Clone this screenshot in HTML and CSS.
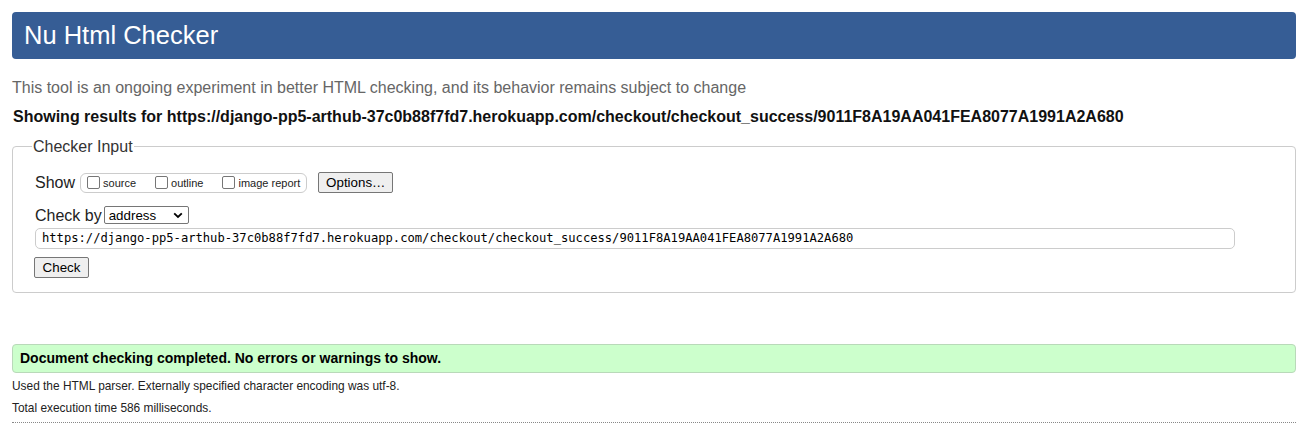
FILE: index.html
```html
<!DOCTYPE html>
<html lang="en">
<head>
<meta charset="utf-8">
<title>Nu Html Checker</title>
<link rel="stylesheet" href="styles.css">
</head>
<body>
<header class="masthead"><h1 class="title">Nu Html Checker</h1></header>
<p class="intro">This tool is an ongoing experiment in better HTML checking, and its behavior remains subject to change</p>
<p class="showing">Showing results for https://django-pp5-arthub-37c0b88f7fd7.herokuapp.com/checkout/checkout_success/9011F8A19AA041FEA8077A1991A2A680</p>
<fieldset class="checker">
  <legend class="legend">Checker Input</legend>
  <div class="row show-row">
    <span class="label">Show</span>
    <span class="opts">
      <span class="opt"><span class="cb"></span>source</span>
      <span class="opt"><span class="cb"></span>outline</span>
      <span class="opt"><span class="cb"></span>image report</span>
    </span>
    <span class="btn btn-options">Options…</span>
  </div>
  <div class="row by-row">
    <span class="label">Check by</span>
    <span class="select">address<svg class="chev" width="10" height="7" viewBox="0 0 10 7"><path d="M1.2 1.3 L5 5 L8.8 1.3" fill="none" stroke="#000" stroke-width="1.8"/></svg></span>
  </div>
  <div class="url">https://django-pp5-arthub-37c0b88f7fd7.herokuapp.com/checkout/checkout_success/9011F8A19AA041FEA8077A1991A2A680</div>
  <div class="row check-row"><span class="btn btn-check">Check</span></div>
</fieldset>
<div class="success">Document checking completed. No errors or warnings to show.</div>
<p class="meta meta-first">Used the HTML parser. Externally specified character encoding was utf-8.</p>
<p class="meta meta-second">Total execution time 586 milliseconds.</p>
<div class="dots"></div>
</body>
</html>
```
FILE: styles.css
```css
html, body { background: #fff; }
body {
  margin: 0;
  padding: 12px 9px 0 12px;
  font-family: "Liberation Sans", Arial, sans-serif;
  color: #000;
}
.masthead {
  background: #365d95;
  border-radius: 4px;
  height: 47px;
}
.title {
  margin: 0;
  padding-left: 12px;
  font-size: 25.5px;
  font-weight: normal;
  line-height: 47px;
  color: #fff;
}
.intro {
  margin: 19px 0 0;
  font-size: 16px;
  line-height: 19px;
  color: #666;
}
.showing {
  margin: 10px 0 0 1px;
  font-size: 16px;
  line-height: 19px;
  font-weight: bold;
  color: #111;
}
.checker {
  margin: 11px 0 0;
  padding: 0 21px 14px 22px;
  border: 1px solid #ccc;
  border-radius: 4px;
  min-width: 0;
}
.legend {
  font-size: 16px;
  line-height: 19px;
  padding: 0 1px;
  margin-left: -3px;
  color: #333;
}
.row { display: flex; align-items: center; }
.label { font-size: 16px; line-height: 19px; color: #222; }
.show-row { margin-top: 16px; height: 21px; }
.opts {
  display: flex;
  align-items: center;
  margin-left: 5px;
  height: 18px;
  border: 1px solid #ccc;
  border-radius: 6px;
  padding: 0 6px 0 6px;
  font-size: 11px;
  color: #222;
}
.opt { display: flex; align-items: center; margin-right: 19px; line-height: 14px; }
.opt:last-child { margin-right: 0; }
.cb {
  width: 11px; height: 11px;
  border: 1px solid #767676;
  border-radius: 2px;
  margin-right: 3px;
  background: #fff;
}
.btn {
  display: inline-flex;
  align-items: center;
  justify-content: center;
  box-sizing: border-box;
  background: #efefef;
  border: 1px solid #767676;
  border-radius: 2px;
  font-size: 13.33px;
  color: #000;
}
.btn-options { margin-left: 11px; width: 75px; height: 21px; }
.by-row { margin-top: 13px; height: 18px; }
.select {
  display: inline-flex;
  align-items: center;
  justify-content: space-between;
  box-sizing: border-box;
  margin-left: 2px;
  width: 85px; height: 18px;
  border: 1px solid #767676;
  border-radius: 2px;
  padding: 0 5px 0 4px;
  font-size: 13.33px;
  color: #000;
}
.chev { display: block; }
.url {
  box-sizing: border-box;
  margin-top: 4px;
  width: 1200px;
  height: 21px;
  border: 1px solid #ccc;
  border-radius: 5px;
  padding-left: 6px;
  font-family: "DejaVu Sans Mono", "Liberation Mono", monospace;
  font-size: 12.15px;
  line-height: 19px;
  color: #000;
  white-space: nowrap;
}
.check-row { margin-top: 8px; }
.btn-check { width: 55px; height: 21px; margin-left: -1px; }
.success {
  margin-top: 51px;
  height: 29px;
  box-sizing: border-box;
  background: #ccffcc;
  border: 1px solid #b9d9b9;
  border-radius: 4px;
  padding-left: 7px;
  font-size: 14px;
  font-weight: bold;
  line-height: 27px;
  color: #000;
}
.meta {
  margin: 0;
  font-size: 11.9px;
  line-height: 14px;
  color: #222;
}
.meta-first { margin-top: 6px; }
.meta-second { margin-top: 8px; }
.dots {
  margin-top: 7px;
  border-top: 1px dotted #888;
}
```
